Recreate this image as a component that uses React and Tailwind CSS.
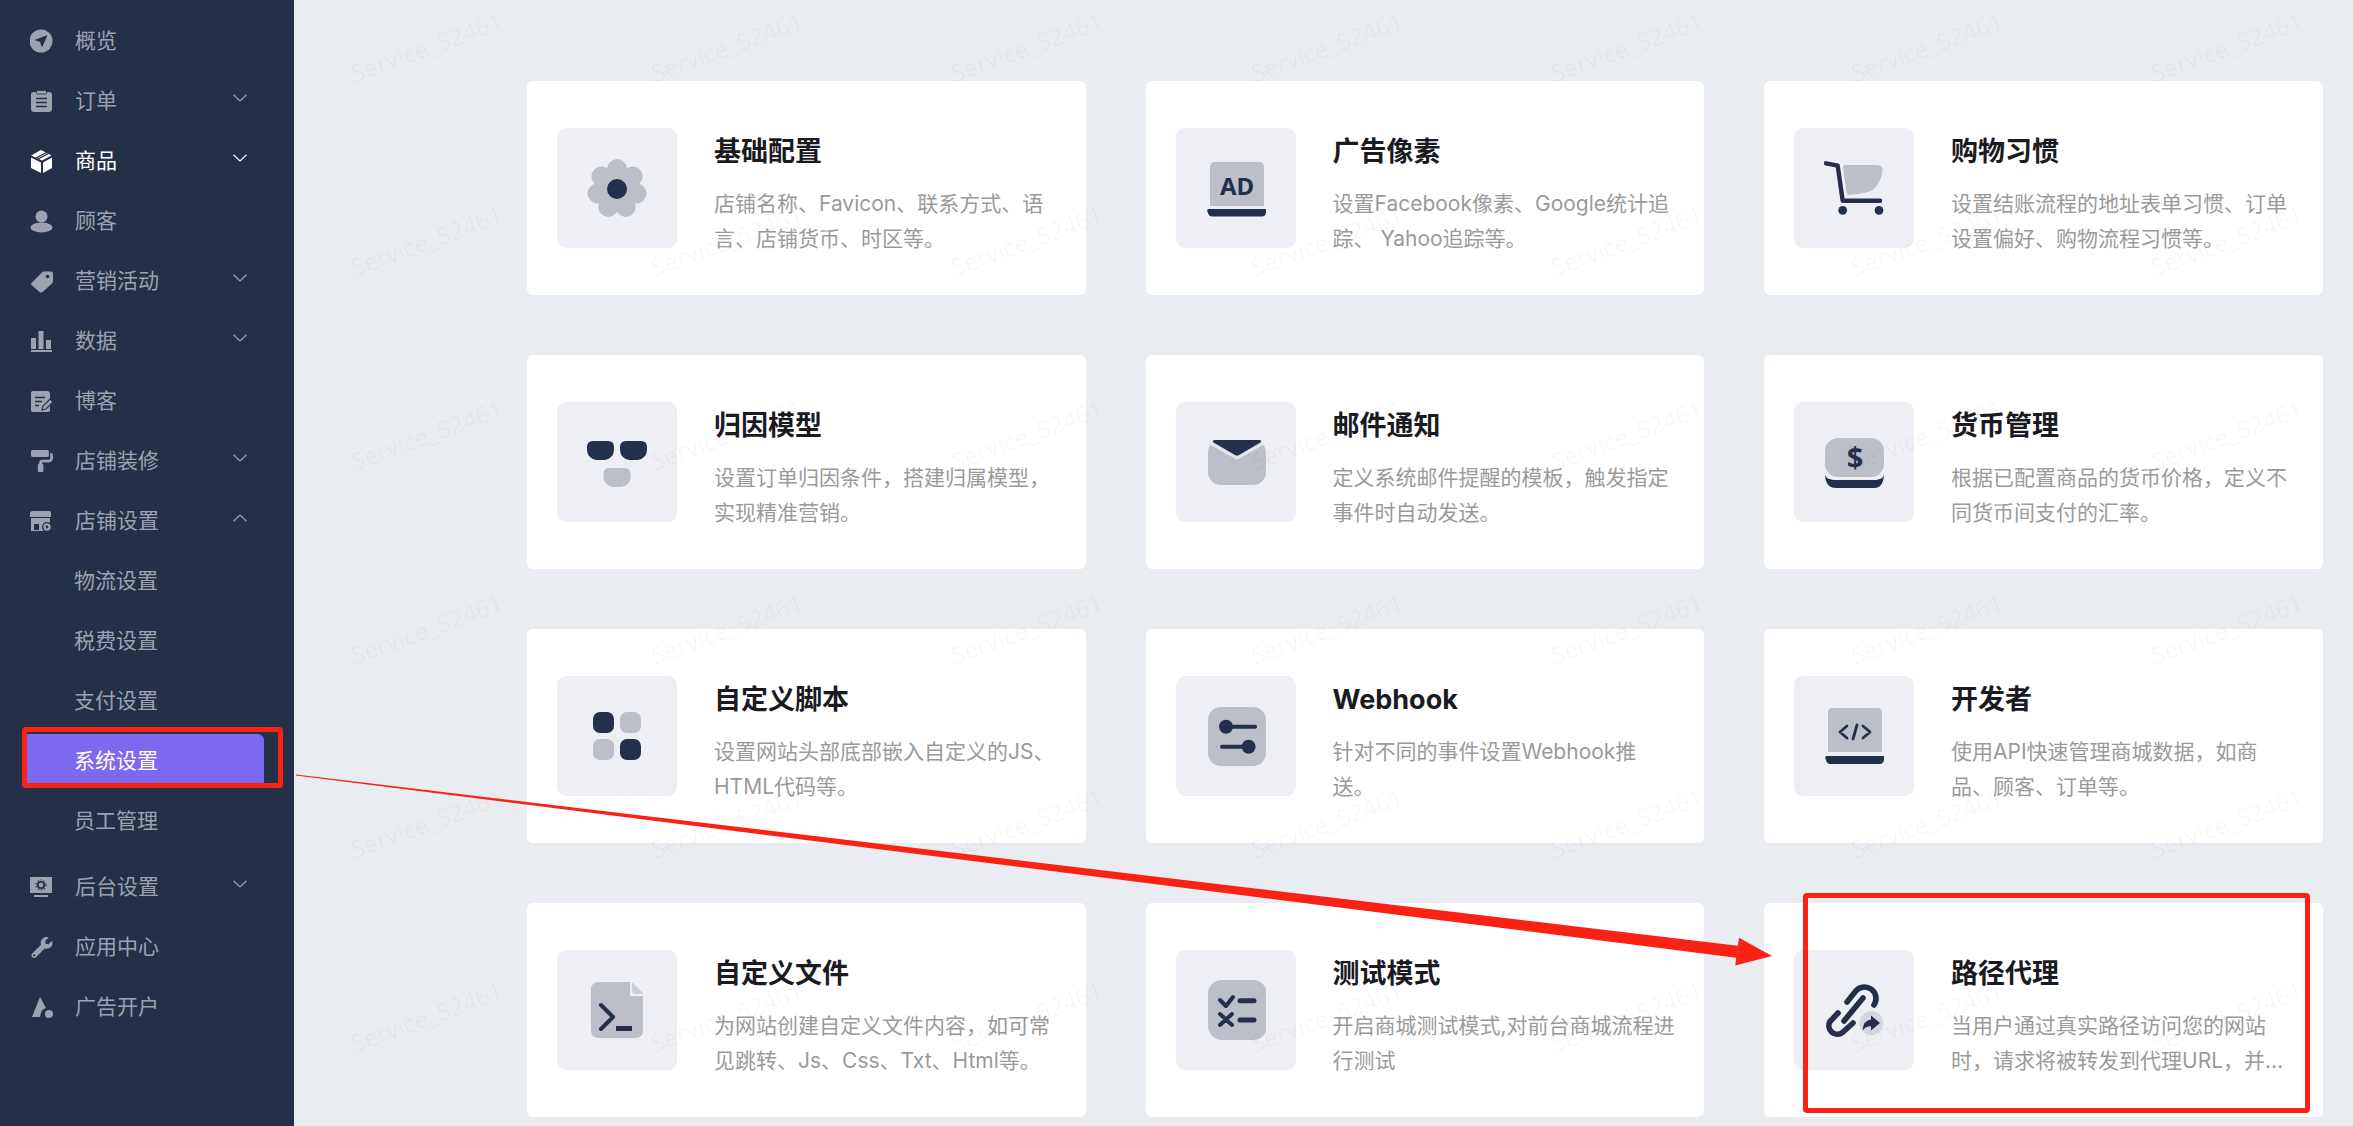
import React from 'react';
import { FaWrench, FaPaintRoller } from 'react-icons/fa';

const DARK = '#232f4b';
const GRAY = '#bcbfc7';
const SIDE = '#9ca3af';

/* ---------- sidebar icons ---------- */
const Ico = ({ children }) => (
  <svg viewBox="0 0 24 24" className="w-6 h-6 shrink-0">{children}</svg>
);

const NavIcon = () => (
  <Ico>
    <circle cx="11" cy="12" r="11.5" fill={SIDE} />
    <polygon points="17.5,6 4.5,11 10,13 12,18.5" fill="#252f47" />
  </Ico>
);
const OrderIcon = () => (
  <Ico>
    <rect x="1" y="3" width="21" height="20" rx="3" fill={SIDE} />
    <rect x="6.5" y="1.5" width="10" height="3.5" rx="1" fill={SIDE} stroke="#252f47" strokeWidth="0.8" />
    <path d="M6 9.5h11M6 13.5h11M6 17.5h11" stroke="#252f47" strokeWidth="1.6" />
  </Ico>
);
const BoxIcon = () => (
  <Ico>
    <polygon points="1,8.5 11,13.5 11,24 1,19" fill="#fff" />
    <polygon points="13,13.5 22,8.5 22,19 13,24" fill="#fff" />
    <polygon points="1,6.5 11,1 21.5,6.5 12,11.5" fill="#fff" />
    <path d="M6 9L16.5 3.5M8 10L18.5 4.5" stroke="#252f47" strokeWidth="1.4" />
  </Ico>
);
const UserIcon = () => (
  <Ico>
    <circle cx="11.5" cy="7.5" r="6" fill={SIDE} />
    <ellipse cx="11.5" cy="18.5" rx="11" ry="5" fill={SIDE} />
  </Ico>
);
const TagIcon = () => (
  <Ico>
    <path d="M1.5 14L12 3.5Q13 2.5 14.5 2.5H21Q23 2.5 23 4.5V12Q23 13.5 22 14.5L12.5 23Q11 24 9.5 23L1.5 16Q0.5 15 1.5 14Z" fill={SIDE} />
    <circle cx="17.5" cy="7.5" r="1.8" fill="#252f47" />
  </Ico>
);
const ChartIcon = () => (
  <Ico>
    <rect x="1" y="9" width="5" height="11" fill={SIDE} />
    <rect x="8.5" y="2" width="5" height="18" fill={SIDE} />
    <rect x="16" y="11" width="5" height="9" fill={SIDE} />
    <rect x="1" y="21" width="21" height="2" fill={SIDE} />
  </Ico>
);
const BlogIcon = () => (
  <Ico>
    <path d="M3 2H17Q20 2 20 5V22Q20 23 17 23H3Q1 23 1 21V4Q1 2 3 2Z" fill={SIDE} />
    <path d="M5 8.5H15M5 12.5H12M5 16.5H9" stroke="#252f47" strokeWidth="1.6" />
    <path d="M12 21L13 17L20 10L23 13L16 20Z" fill={SIDE} stroke="#252f47" strokeWidth="1.1" />
  </Ico>
);
const StoreIcon = () => (
  <Ico>
    <path d="M3 2H19Q21 2 21 4V8H0V4Q0 2 3 2Z" fill={SIDE} />
    <path d="M1 9H20V14H14V22H1Z" fill={SIDE} />
    <rect x="4" y="15" width="5" height="6" fill="#252f47" />
    <circle cx="17" cy="18" r="4.4" fill={SIDE} stroke="#252f47" strokeWidth="1.4" />
    <circle cx="17" cy="18" r="1.4" fill="#252f47" />
  </Ico>
);
const ScreenIcon = () => (
  <Ico>
    <rect x="0" y="2" width="22" height="16" fill={SIDE} />
    <circle cx="11" cy="10" r="3.2" fill="none" stroke="#252f47" strokeWidth="1.8" />
    <circle cx="11" cy="10" r="5" fill="none" stroke="#252f47" strokeWidth="1.2" strokeDasharray="1.4 1.8" />
    <rect x="4" y="20" width="14" height="2" fill={SIDE} />
  </Ico>
);
const AdIcon = () => (
  <Ico>
    <path d="M10 2L16 13Q11 14 10 22H2Z" fill={SIDE} />
    <circle cx="19" cy="19" r="4" fill={SIDE} />
  </Ico>
);

const Chevron = ({ up, white }) => (
  <svg viewBox="0 0 14 8" className={`w-[14px] h-2 ml-auto mr-[47px] mb-[6px] ${up ? 'rotate-180' : ''}`}>
    <path d="M0.5 0.7L7 7L13.5 0.7" fill="none" stroke={white ? '#fff' : SIDE} strokeWidth="1.2" />
  </svg>
);

const menu = [
  { label: '概览', icon: <NavIcon /> },
  { label: '订单', icon: <OrderIcon />, arrow: true },
  { label: '商品', icon: <BoxIcon />, arrow: true, active: true },
  { label: '顾客', icon: <UserIcon /> },
  { label: '营销活动', icon: <TagIcon />, arrow: true },
  { label: '数据', icon: <ChartIcon />, arrow: true },
  { label: '博客', icon: <BlogIcon /> },
  { label: '店铺装修', icon: <FaPaintRoller className="w-6 h-[22px] shrink-0" />, arrow: true },
  { label: '店铺设置', icon: <StoreIcon />, arrow: true, open: true },
];

const subMenu = ['物流设置', '税费设置', '支付设置', '系统设置', '员工管理'];

const menuBottom = [
  { label: '后台设置', icon: <ScreenIcon />, arrow: true },
  { label: '应用中心', icon: <FaWrench className="w-6 h-[21px] shrink-0" /> },
  { label: '广告开户', icon: <AdIcon /> },
];

const MenuRow = ({ item }) => (
  <div className={`flex items-center h-[54px] mb-[6px] pl-[30px] gap-[21px] text-[21px] ${item.active ? 'text-white' : 'text-[#9ca3af]'}`}>
    {item.icon}
    <span>{item.label}</span>
    {item.arrow && <Chevron up={item.open} white={item.active} />}
  </div>
);

const Sidebar = () => (
  <aside className="relative z-20 w-[294px] shrink-0 h-full bg-[#252f47] pt-[14px]">
    {menu.map((item) => <MenuRow key={item.label} item={item} />)}
    {subMenu.map((label) => (
      <div
        key={label}
        className={`flex items-center h-[54px] mb-[6px] ml-[27px] w-[237px] pl-[47px] text-[21px] rounded-r-md ${label === '系统设置' ? 'bg-[#7d69ef] text-white' : 'text-[#9ca3af]'}`}
      >
        {label}
      </div>
    ))}
    <div className="mt-[12px]">
      {menuBottom.map((item) => <MenuRow key={item.label} item={item} />)}
    </div>
  </aside>
);

/* ---------- card icons, 60x60 ---------- */
const Big = ({ children }) => (
  <svg viewBox="0 0 60 60" className="w-[60px] h-[60px]">{children}</svg>
);

const lobes = [0, 1, 2, 3, 4, 5, 6].map((i) => {
  const a = (i * 2 * Math.PI) / 7 - Math.PI / 2;
  return [30 + 20 * Math.cos(a), 31 + 20 * Math.sin(a)];
});

const LENS = 'M6 9H21Q27 9 27 15V17Q27 22 24 25Q21 28 18 28H9Q6 28 3 25Q0 22 0 17V15Q0 9 6 9Z';

const icons = {
  flower: (
    <Big>
      <circle cx="30" cy="31" r="22" fill={GRAY} />
      {lobes.map(([x, y], i) => <circle key={i} cx={x} cy={y} r="10" fill={GRAY} />)}
      <circle cx="30" cy="31" r="10" fill={DARK} />
    </Big>
  ),
  ad: (
    <Big>
      <path d="M9 4H53Q58 4 58 9V48H4V9Q4 4 9 4Z" fill={GRAY} />
      <path d="M3 51H59Q62 51 60 55Q59 58.5 56 58.5H6Q3 58.5 2 55Q0 51 3 51Z" fill={DARK} />
      <text x="31" y="37" textAnchor="middle" fontSize="24" fontWeight="700" fill={DARK} fontFamily="'Noto Sans', sans-serif">AD</text>
    </Big>
  ),
  cart: (
    <Big>
      <path d="M20 7H53Q59 7 58.5 13Q57 24 50 31Q46 35 25 37Q23 37 22.5 34L19 10Q19 7 20 7Z" fill={GRAY} />
      <path d="M2 5.3L13.7 7.7L18.7 42.7H56" fill="none" stroke={DARK} strokeWidth="4.4" strokeLinecap="round" strokeLinejoin="round" />
      <circle cx="18.7" cy="52.3" r="4.4" fill={DARK} />
      <circle cx="55" cy="52.3" r="4.4" fill={DARK} />
    </Big>
  ),
  glasses: (
    <Big>
      <path d={LENS} fill={DARK} />
      <path d={LENS} fill={DARK} transform="translate(33 0)" />
      <path d={LENS} fill={GRAY} transform="translate(16.5 27)" />
    </Big>
  ),
  mail: (
    <Big>
      <rect x="2" y="8" width="58" height="45" rx="13" fill={GRAY} />
      <path d="M4 11L31 26L58 11" fill="none" stroke="#e4e6ec" strokeWidth="3" />
      <path d="M9 8H53Q56 8 55 10L33 23Q31 24 29 23L7 10Q6 8 9 8Z" fill={DARK} />
    </Big>
  ),
  money: (
    <Big>
      <path d="M1 41C1 50 4 56 12 56H50C57 56 60 50 60 41C60 46 56 48 50 48H12C5 48 1 46 1 41Z" fill={DARK} />
      <rect x="1" y="6" width="59" height="39" rx="13" fill={GRAY} />
      <text x="31" y="36" textAnchor="middle" fontSize="29" fontWeight="700" fill={DARK} fontFamily="'Noto Sans', sans-serif">$</text>
    </Big>
  ),
  blocks: (
    <Big>
      <rect x="6" y="6" width="21" height="21" rx="7" fill={DARK} />
      <rect x="33" y="6" width="21" height="21" rx="7" fill={GRAY} />
      <rect x="6" y="33" width="21" height="21" rx="7" fill={GRAY} />
      <rect x="33" y="33" width="21" height="21" rx="7" fill={DARK} />
    </Big>
  ),
  sliders: (
    <Big>
      <rect x="2" y="1" width="58" height="59" rx="13" fill={GRAY} />
      <path d="M20 20.7H49M16 40.7H42" stroke={DARK} strokeWidth="4" strokeLinecap="round" />
      <circle cx="20" cy="20.7" r="7" fill={DARK} />
      <circle cx="42.6" cy="40.7" r="7" fill={DARK} />
    </Big>
  ),
  code: (
    <Big>
      <path d="M9 2H53Q58 2 58 7V46H4V7Q4 2 9 2Z" fill={GRAY} />
      <path d="M3 50H59Q62 50 60 54Q59 58 56 58H6Q3 58 2 54Q0 50 3 50Z" fill={DARK} />
      <path d="M23 20L16 26L23 32M39 20L46 26L39 32M33 19L29 33" fill="none" stroke={DARK} strokeWidth="2.8" strokeLinecap="round" strokeLinejoin="round" />
    </Big>
  ),
  file: (
    <Big>
      <path d="M12 2H43V16H56V50Q56 58 48 58H12Q4 58 4 50V10Q4 2 12 2Z" fill={GRAY} />
      <path d="M45 2L56 13V14H49Q45 14 45 10Z" fill={GRAY} opacity="0.7" />
      <path d="M14 25L26 37L14 49" fill="none" stroke={DARK} strokeWidth="4" strokeLinecap="round" strokeLinejoin="round" />
      <rect x="29" y="46" width="16" height="5" fill={DARK} />
    </Big>
  ),
  test: (
    <Big>
      <rect x="2" y="0" width="59" height="60" rx="14" fill={GRAY} />
      <path d="M14 20L20 26L27 17M14 34L26 45M26 34L14 45" fill="none" stroke={DARK} strokeWidth="4" strokeLinecap="round" strokeLinejoin="round" />
      <path d="M34 20.7H48M34 40H48" stroke={DARK} strokeWidth="5" strokeLinecap="round" />
    </Big>
  ),
  link: (
    <Big>
      <g fill="none" stroke={DARK} strokeWidth="5.6" strokeLinecap="round" strokeLinejoin="round">
        <path d="M14 33L6 41.5A8.5 8.5 0 0 0 18.5 52.5L29 43" />
        <path d="M20 41L39 18" />
        <path d="M23 22L31 12A11.5 11.5 0 0 1 50 25" />
      </g>
      <circle cx="47.3" cy="43" r="12" fill="#d5d7dd" />
      <path d="M47 35.5L56 43L47 50.5V46.3Q42 46 38.5 50.5Q39.5 40 47 39.5Z" fill={DARK} />
    </Big>
  ),
};

const cards = [
  { icon: 'flower', title: '基础配置', desc: '店铺名称、Favicon、联系方式、语言、店铺货币、时区等。' },
  { icon: 'ad', title: '广告像素', desc: '设置Facebook像素、Google统计追踪、 Yahoo追踪等。' },
  { icon: 'cart', title: '购物习惯', desc: '设置结账流程的地址表单习惯、订单设置偏好、购物流程习惯等。' },
  { icon: 'glasses', title: '归因模型', desc: '设置订单归因条件，搭建归属模型，实现精准营销。' },
  { icon: 'mail', title: '邮件通知', desc: '定义系统邮件提醒的模板，触发指定事件时自动发送。' },
  { icon: 'money', title: '货币管理', desc: '根据已配置商品的货币价格，定义不同货币间支付的汇率。' },
  { icon: 'blocks', title: '自定义脚本', desc: '设置网站头部底部嵌入自定义的JS、HTML代码等。' },
  { icon: 'sliders', title: 'Webhook', desc: '针对不同的事件设置Webhook推送。' },
  { icon: 'code', title: '开发者', desc: '使用API快速管理商城数据，如商品、顾客、订单等。' },
  { icon: 'file', title: '自定义文件', desc: '为网站创建自定义文件内容，如可常见跳转、Js、Css、Txt、Html等。' },
  { icon: 'test', title: '测试模式', desc: '开启商城测试模式,对前台商城流程进行测试' },
  { icon: 'link', title: '路径代理', desc: '当用户通过真实路径访问您的网站时，请求将被转发到代理URL，并返回代理URL的响应内容。' },
];

const Card = ({ card }) => (
  <div className="flex items-center h-[214px] py-[30px] pl-[30px] pr-[29px] gap-[37px] bg-white rounded-md">
    <div className="flex items-center justify-center w-[120px] h-[120px] shrink-0 rounded-[9px] bg-[#eeeff5]">
      {icons[card.icon]}
    </div>
    <div className="flex-1 min-w-0 h-[120px] pt-[4px]">
      <h3 className="text-[27px] leading-[40px] font-bold text-[#1a1a1f]">{card.title}</h3>
      <p className="mt-[14px] text-[21px] leading-[35px] text-[#9a9a9a] line-clamp-2">{card.desc}</p>
    </div>
  </div>
);

/* faint account watermark repeated over the content area */
const Watermark = () => (
  <div className="absolute z-10 left-[277px] top-[-50px] grid grid-cols-[repeat(7,300px)] auto-rows-[194px] pointer-events-none">
    {Array.from({ length: 42 }).map((_, i) => (
      <div key={i} className="flex items-center justify-center">
        <span className="-rotate-[20deg] text-[24px] text-black/[0.04] font-['Noto_Sans',sans-serif]">Service_52461</span>
      </div>
    ))}
  </div>
);

/* red marks someone drew on top of the screenshot */
const Annotations = () => (
  <>
    <div className="absolute z-30 left-[22px] top-[727px] w-[261px] h-[61px] border-[5px] border-[#fa2115] rounded-[4px] pointer-events-none" />
    <div className="absolute z-30 left-[1803px] top-[893px] w-[507px] h-[220px] border-[5px] border-[#fa2115] rounded-[4px] pointer-events-none" />
    <svg className="absolute z-30 left-0 top-0 pointer-events-none" width="2353" height="1126">
      <polygon
        points="296,774.5 1737.8,945.7 1739,937.8 1772,956 1735.3,965.6 1736.2,957.7 296,775.5"
        fill="#fa2115"
      />
    </svg>
  </>
);

export default function App() {
  return (
    <div className="relative flex w-[2353px] h-[1126px] overflow-hidden bg-[#e9edf2] font-['Inter','Noto_Sans_CJK_SC',sans-serif]">
      <Sidebar />
      <main className="flex-1 pl-[233px] pt-[81px]">
        <div className="grid grid-cols-[repeat(3,558.5px)] gap-x-[60px] gap-y-[60px]">
          {cards.map((card) => <Card key={card.title} card={card} />)}
        </div>
      </main>
      <Watermark />
      <Annotations />
    </div>
  );
}
